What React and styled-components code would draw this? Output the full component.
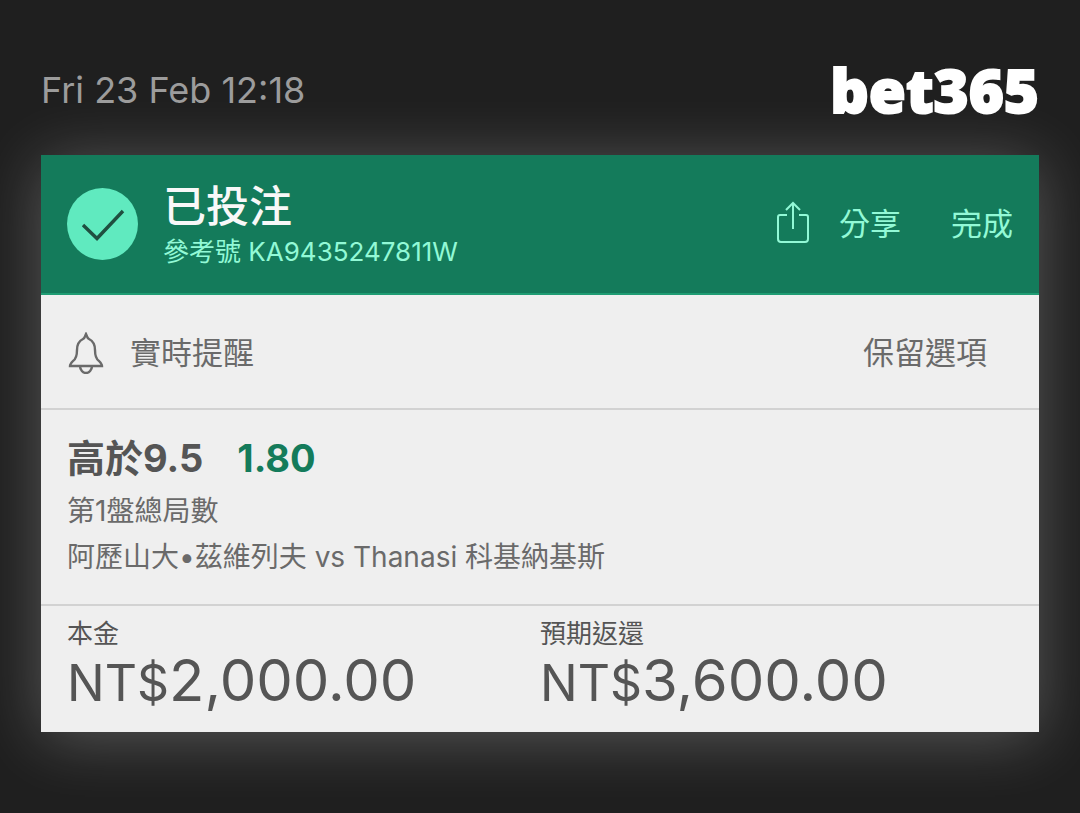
import styled, { createGlobalStyle } from "styled-components";

const GlobalStyle = createGlobalStyle`
  * {
    box-sizing: border-box;
  }
  body {
    margin: 0;
    min-height: 100vh;
    background-color: #1f1f1f;
    font-family: Inter, "Noto Sans CJK TC", sans-serif;
  }
`;
const Page = styled.main`
  padding: 60px 41px 80px;
`;
const TopBar = styled.div`
  display: flex;
  justify-content: space-between;
  align-items: center;
  height: 60px;
  margin-bottom: 35px;
`;
const PlacedAt = styled.time`
  color: #9c9c9c;
  font-size: 36px;
`;
const Logo = styled.span`
  color: #fff;
  font-family: "Noto Sans", "Open Sans", sans-serif;
  font-size: 60px;
  font-weight: 900;
  line-height: 60px;
  -webkit-text-stroke: 2px #fff;
`;
const Card = styled.section`
  background-color: #efefef;
  color: #555;
  box-shadow: 0 6px 60px rgba(255, 255, 255, 0.26);
`;
const Header = styled.header`
  display: flex;
  align-items: center;
  height: 140px;
  padding: 0 26px;
  background-color: #147b5b;
  border-bottom: 2px solid #1f9c73;
`;
const CheckCircle = styled.div`
  display: flex;
  width: 71px;
  height: 72px;
  margin-right: 25px;
  border-radius: 50%;
  background-color: #60eabf;
`;
const HeaderText = styled.div`
  flex: 1;
  padding-top: 4px;
`;
const Title = styled.h1`
  margin: 0;
  color: #f8f8f8;
  font-size: 43px;
  font-weight: 500;
  line-height: 52px;
`;
const Reference = styled.p`
  margin: 0;
  color: #92f9d6;
  font-size: 26px;
  line-height: 40px;
`;
const HeaderButton = styled.button`
  display: flex;
  align-items: center;
  gap: 30px;
  margin-left: 50px;
  padding: 0;
  border: none;
  background: none;
  color: #92f9d6;
  font-family: inherit;
  font-size: 31px;
  line-height: 44px;
`;
const AlertRow = styled.div`
  display: flex;
  justify-content: space-between;
  align-items: center;
  height: 115px;
  padding: 2px 52px 0 26px;
  border-bottom: 2px solid #d2d2d2;
`;
const RowButton = styled.button`
  display: flex;
  align-items: center;
  gap: 26px;
  padding: 0;
  border: none;
  background: none;
  color: #6a6a6a;
  font-family: inherit;
  font-size: 31px;
  line-height: 44px;
`;
const Selection = styled.div`
  padding: 22px 26px 24px;
  border-bottom: 2px solid #d2d2d2;
`;
const Pick = styled.h2`
  display: flex;
  gap: 34px;
  margin: 0 0 4px;
  font-size: 38px;
  font-weight: 700;
  line-height: 52px;
`;
const Odds = styled.span`
  color: #147b5b;
`;
const Detail = styled.p`
  margin: 0;
  color: #6a6a6a;
  font-size: 28px;
  line-height: 46px;
`;
const Totals = styled.dl`
  display: grid;
  grid-template-columns: 1fr 1fr;
  margin: 0;
  padding: 8px 26px 23px;
`;
const Label = styled.dt`
  color: #555;
  font-size: 26px;
  line-height: 40px;
`;
const Amount = styled.dd`
  margin: 0;
  font-size: 58px;
  line-height: 52px;
`;
const Currency = styled.span`
  font-size: 50px;
`;

const CheckIcon = () => (
  <svg width="71" height="72" viewBox="0 0 71 72" fill="none" stroke="#1f4f40" strokeWidth="3.4">
    <path d="M16 37 L30 50.5 L56 23" />
  </svg>
);

const ShareIcon = () => (
  <svg width="32" height="46" viewBox="0 0 32 46" fill="none" stroke="currentColor" strokeWidth="2">
    <path d="M10 14 H3 Q1 14 1 16 V38 Q1 41 4 41 H28 Q31 41 31 38 V16 Q31 14 29 14 H22" />
    <path d="M16 28 V2 M9 9 L16 2 L23 9" />
  </svg>
);

const BellIcon = () => (
  <svg width="37" height="42" viewBox="0 0 37 42" fill="none" stroke="currentColor" strokeWidth="2.4">
    <path d="M19 2 C18 4 18 6 16 7 C12 9 10 13 10 18 C10 24 9 27 6 29 C4 31 3 32 3 34 H35 C35 32 34 31 32 29 C29 27 28 24 28 18 C28 13 26 9 22 7 C20 6 20 4 19 2 Z" />
    <path d="M13 34 C13 38 16 41 19 41 C22 41 25 38 25 34" />
  </svg>
);

const totals = [
  { label: "本金", amount: "2,000.00" },
  { label: "預期返還", amount: "3,600.00" },
];

const App = () => {
  return (
    <>
      <GlobalStyle />
      <Page>
        <TopBar>
          <PlacedAt>Fri 23 Feb 12:18</PlacedAt>
          <Logo>bet365</Logo>
        </TopBar>
        <Card>
          <Header>
            <CheckCircle>
              <CheckIcon />
            </CheckCircle>
            <HeaderText>
              <Title>已投注</Title>
              <Reference>參考號 KA9435247811W</Reference>
            </HeaderText>
            <HeaderButton type="button">
              <ShareIcon />
              分享
            </HeaderButton>
            <HeaderButton type="button">完成</HeaderButton>
          </Header>
          <AlertRow>
            <RowButton type="button">
              <BellIcon />
              實時提醒
            </RowButton>
            <RowButton type="button">保留選項</RowButton>
          </AlertRow>
          <Selection>
            <Pick>
              高於9.5
              <Odds>1.80</Odds>
            </Pick>
            <Detail>第1盤總局數</Detail>
            <Detail>阿歷山大•茲維列夫 vs Thanasi 科基納基斯</Detail>
          </Selection>
          <Totals>
            {totals.map(({ label, amount }) => (
              <div key={label}>
                <Label>{label}</Label>
                <Amount>
                  <Currency>NT$</Currency>
                  {amount}
                </Amount>
              </div>
            ))}
          </Totals>
        </Card>
      </Page>
    </>
  );
};

export default App;
